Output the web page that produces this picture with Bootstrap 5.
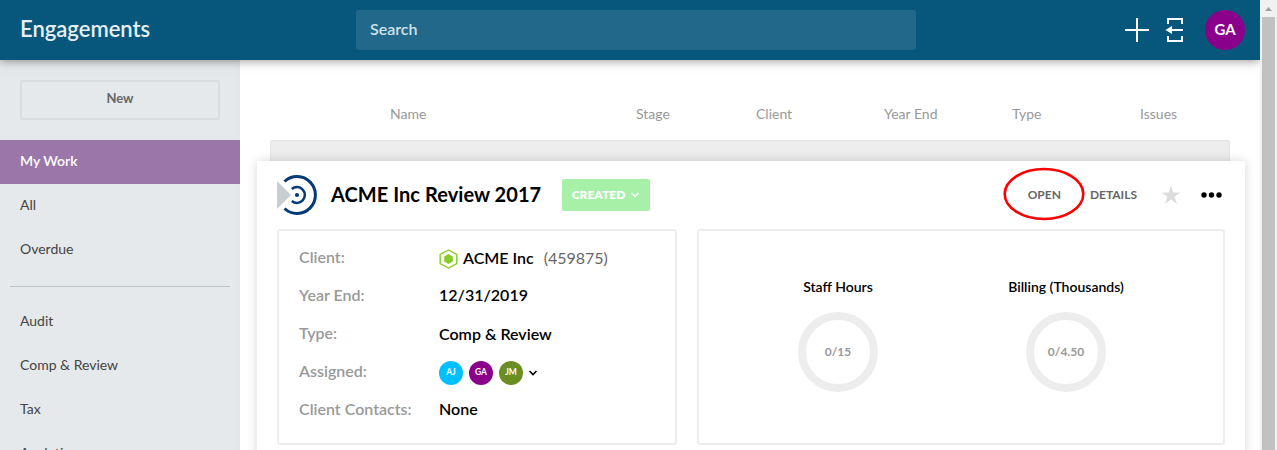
<!DOCTYPE html>
<html lang="en">
<head>
<meta charset="utf-8">
<meta name="viewport" content="width=device-width, initial-scale=1">
<title>Engagements</title>
<link href="https://cdn.jsdelivr.net/npm/bootstrap@5.3.0/dist/css/bootstrap.min.css" rel="stylesheet">
<style>
body{font-family:Lato,"Liberation Sans",sans-serif;font-size:14px;color:#000;background:#fff}
.app-bar{height:60px;background:#07577d;box-shadow:0 0 10px rgba(0,0,0,.5);z-index:5}
.app-title{width:356px;padding:0 0 2px 20px;font-size:22px;font-weight:600;line-height:26px;color:#e6eef2}
.search-box,.search-box:focus{width:560px;height:40px;background:#21688b;color:#fff;font-size:16px;font-weight:600;padding:0 14px 3px;border-radius:3px}
.search-box::placeholder{color:#d3e1e8;opacity:1}
.avatar{width:24px;height:24px;font-size:8.500px;font-weight:700;color:#fff}
.avatar-lg{width:40px;height:40px;font-size:15px;padding-bottom:2px}
.side-menu{width:240px;background:linear-gradient(90deg,#e5e9eb 0 232px,#e4e6e9)}
.btn-new,.btn-new:hover{height:40px;margin:20px;border:2px solid #d9dddf;border-radius:2px;font-size:13px;font-weight:700;color:#666;padding:0 0 4px;line-height:32px}
.side-menu .nav-link{height:44px;padding:0 20px;line-height:42px;color:#444;font-size:14px}
.side-menu .nav-link.active{background:#9b76a8;color:#fff;font-weight:600}
.side-menu hr{margin:14px 10px 13px;border-color:#aeb5b8;opacity:.75}
.col-heads{display:grid;grid-template-columns:246px 120px 128px 128px 128px 1fr;padding:44px 0 0 150px;height:80px;line-height:20px;color:#999}
.row-strip{height:40px;margin:0 30px;background:#ededed;border:1px solid #e3e3e3;border-radius:2px}
.detail-card{margin:-19px 15px 0 17px;padding:0 20px;height:330px;background:#fff;box-shadow:0 0 10px rgba(0,0,0,.16)}
.detail-head{height:68px}
.detail-title{font-size:20px;font-weight:700;letter-spacing:.05px;margin:0 20px 0 14px;padding-bottom:2px;width:211px;line-height:26px}
.stage-btn,.stage-btn:hover{width:88px;height:32px;padding:0;background:#a7f0a7;color:#fff;font-size:12px;font-weight:800;border:0;border-radius:2px}
.link-act{font-size:12px;font-weight:700;color:#666;text-decoration:none}
.ring-mark{left:-26px;top:-20px;z-index:2}
.panel{height:216px;border:2px solid #ededed;border-radius:3px}
.facts{width:400px;padding:7px 20px;font-size:16px}
.facts dl{display:grid;grid-template-columns:140px 1fr;grid-auto-rows:38px;align-items:center}
.facts dt{font-weight:600;color:#999}
.facts dd{font-weight:600;margin:0}
.facts .assigned{padding-top:3px}
.gauge-title{font-size:14px;font-weight:600;line-height:20px;margin-bottom:15px}
.gauge{width:80px;height:80px;border:8px solid #ededed;color:#999;font-size:12px;font-weight:700}
.scroll-track{width:17px;background:#f1f1f1}
.scroll-thumb{width:13px;background:#c1c1c1}
</style>
</head>
<body>
<div class="d-flex vh-100 overflow-hidden">
  <div class="d-flex flex-column flex-grow-1 overflow-hidden">
    <header class="app-bar d-flex align-items-center flex-shrink-0 position-relative">
      <div class="app-title">Engagements</div>
      <input class="search-box form-control border-0 shadow-none" placeholder="Search" aria-label="Search">
      <div class="d-flex align-items-center ms-auto" style="padding-right:15px">
        <svg width="24" height="24" viewBox="0 0 24 24" stroke="#fff" stroke-width="2"><path d="M12 0v24M0 12h24"/></svg>
        <svg style="margin-left:12px" width="24" height="24" viewBox="0 0 24 24" fill="none" stroke="#fff" stroke-width="2"><path d="M7 6V1h14v5M7 18v5h14v-5M10 12h12"/><path d="M4.500 12 11 8v8Z" fill="#fff" stroke="none"/></svg>
        <span class="avatar avatar-lg rounded-circle d-flex align-items-center justify-content-center" style="background:#8b008b;margin-left:20px">GA</span>
      </div>
    </header>
    <div class="d-flex flex-grow-1 overflow-hidden">
      <nav class="side-menu nav flex-column flex-nowrap flex-shrink-0">
        <button class="btn btn-new flex-shrink-0">New</button>
        <a class="nav-link active flex-shrink-0" href="#">My Work</a>
        <a class="nav-link flex-shrink-0" href="#">All</a>
        <a class="nav-link flex-shrink-0" href="#">Overdue</a>
        <hr class="flex-shrink-0">
        <a class="nav-link flex-shrink-0" href="#">Audit</a>
        <a class="nav-link flex-shrink-0" href="#">Comp &amp; Review</a>
        <a class="nav-link flex-shrink-0" href="#">Tax</a>
        <a class="nav-link flex-shrink-0" href="#">Analytics</a>
      </nav>
      <main class="flex-grow-1 overflow-hidden">
        <div class="col-heads"><span>Name</span><span>Stage</span><span>Client</span><span>Year End</span><span>Type</span><span>Issues</span></div>
        <div class="row-strip"></div>
        <section class="detail-card position-relative">
          <div class="detail-head d-flex align-items-center">
            <svg width="40" height="40" viewBox="0 0 40 40" fill="none" stroke="#053a78"><path d="M0 6v28l14-14Z" fill="#c8cdd1" stroke="none"/><path d="M7.500 6.500A18.400 18.400 0 1 1 7.500 33.500" stroke-width="3"/><path d="M14.800 14A7.900 7.900 0 1 1 14.800 26" stroke-width="2.500"/><circle cx="20" cy="20" r="2.100" fill="#053a78" stroke="none"/></svg>
            <h1 class="detail-title text-nowrap">ACME Inc Review 2017</h1>
            <button class="btn stage-btn d-flex align-items-center justify-content-center"><span>CREATED</span><svg style="margin-left:5px" width="10" height="8" viewBox="0 0 10 8" fill="none" stroke="#fff" stroke-width="1.500"><path d="m1.500 2 3.500 3.500L8.500 2"/></svg></button>
            <div class="ms-auto d-flex align-items-center">
              <a class="link-act position-relative" href="#">OPEN
                <svg class="ring-mark position-absolute" width="84" height="56" viewBox="0 0 84 56" fill="none" stroke="#f00" stroke-width="2.600"><ellipse cx="42" cy="28" rx="39.300" ry="25"/></svg>
              </a>
              <a class="link-act" style="margin-left:29px" href="#">DETAILS</a>
              <svg style="margin-left:24px" width="20" height="20" viewBox="0 0 20 20" fill="#ddd"><path d="m10 .5 2.300 6.900H19.500l-5.800 4.300 2.200 7.300L10 14.600 4.100 19l2.200-7.300L.5 7.400h7.200Z"/></svg>
              <svg style="margin:0 3px 0 19px" width="22" height="8" viewBox="0 0 22 8"><circle cx="4" cy="4" r="2.700"/><circle cx="11.500" cy="4" r="2.700"/><circle cx="19" cy="4" r="2.700"/></svg>
            </div>
          </div>
          <div class="d-flex">
            <div class="panel facts flex-shrink-0">
              <dl class="mb-0">
                <dt>Client:</dt>
                <dd class="d-flex align-items-center pt-1"><svg width="19" height="20" viewBox="0 0 19 20" fill="#87cc25"><path d="M9.500 1l8.300 4.500v9L9.500 19l-8.300-4.500v-9Z" fill="none" stroke="#87cc25" stroke-width="1.400"/><path d="M9.500 5l4.300 2.500v5L9.500 15l-4.300-2.500v-5Z"/></svg><span class="pb-1" style="margin:2px 0 0 5px">ACME Inc</span><span class="fw-normal pb-1" style="margin:2px 0 0 10px;color:#666">(459875)</span></dd>
                <dt>Year End:</dt><dd>12/31/2019</dd>
                <dt>Type:</dt><dd style="padding-top:2px">Comp &amp; Review</dd>
                <dt>Assigned:</dt>
                <dd class="assigned d-flex align-items-center">
                  <span class="avatar rounded-circle d-flex align-items-center justify-content-center" style="background:#00bfff;margin-right:6px">AJ</span>
                  <span class="avatar rounded-circle d-flex align-items-center justify-content-center" style="background:#8b008b;margin-right:6px">GA</span>
                  <span class="avatar rounded-circle d-flex align-items-center justify-content-center" style="background:#6b8e23;margin-right:5px">JM</span>
                  <svg width="10" height="8" viewBox="0 0 10 8" fill="none" stroke="#000" stroke-width="1.600"><path d="m1.500 2 3.500 3.500L8.500 2"/></svg>
                </dd>
                <dt>Client Contacts:</dt><dd>None</dd>
              </dl>
            </div>
            <div class="panel flex-grow-1 d-flex justify-content-center" style="margin-left:20px;padding-top:46px">
              <div class="d-flex flex-column align-items-center" style="width:228px"><div class="gauge-title">Staff Hours</div><div class="gauge rounded-circle d-flex align-items-center justify-content-center">0/15</div></div>
              <div class="d-flex flex-column align-items-center" style="width:228px;margin-right:18px"><div class="gauge-title">Billing (Thousands)</div><div class="gauge rounded-circle d-flex align-items-center justify-content-center">0/4.50</div></div>
            </div>
          </div>
        </section>
      </main>
    </div>
  </div>
  <div class="scroll-track flex-shrink-0 d-flex flex-column align-items-center">
    <svg class="flex-shrink-0" width="17" height="17" viewBox="0 0 17 17"><path d="M5 11h7L8.500 7Z" fill="#a3a3a3"/></svg>
    <div class="scroll-thumb flex-grow-1"></div>
  </div>
</div>
<script src="https://cdn.jsdelivr.net/npm/bootstrap@5.3.0/dist/js/bootstrap.bundle.min.js"></script>
</body>
</html>
